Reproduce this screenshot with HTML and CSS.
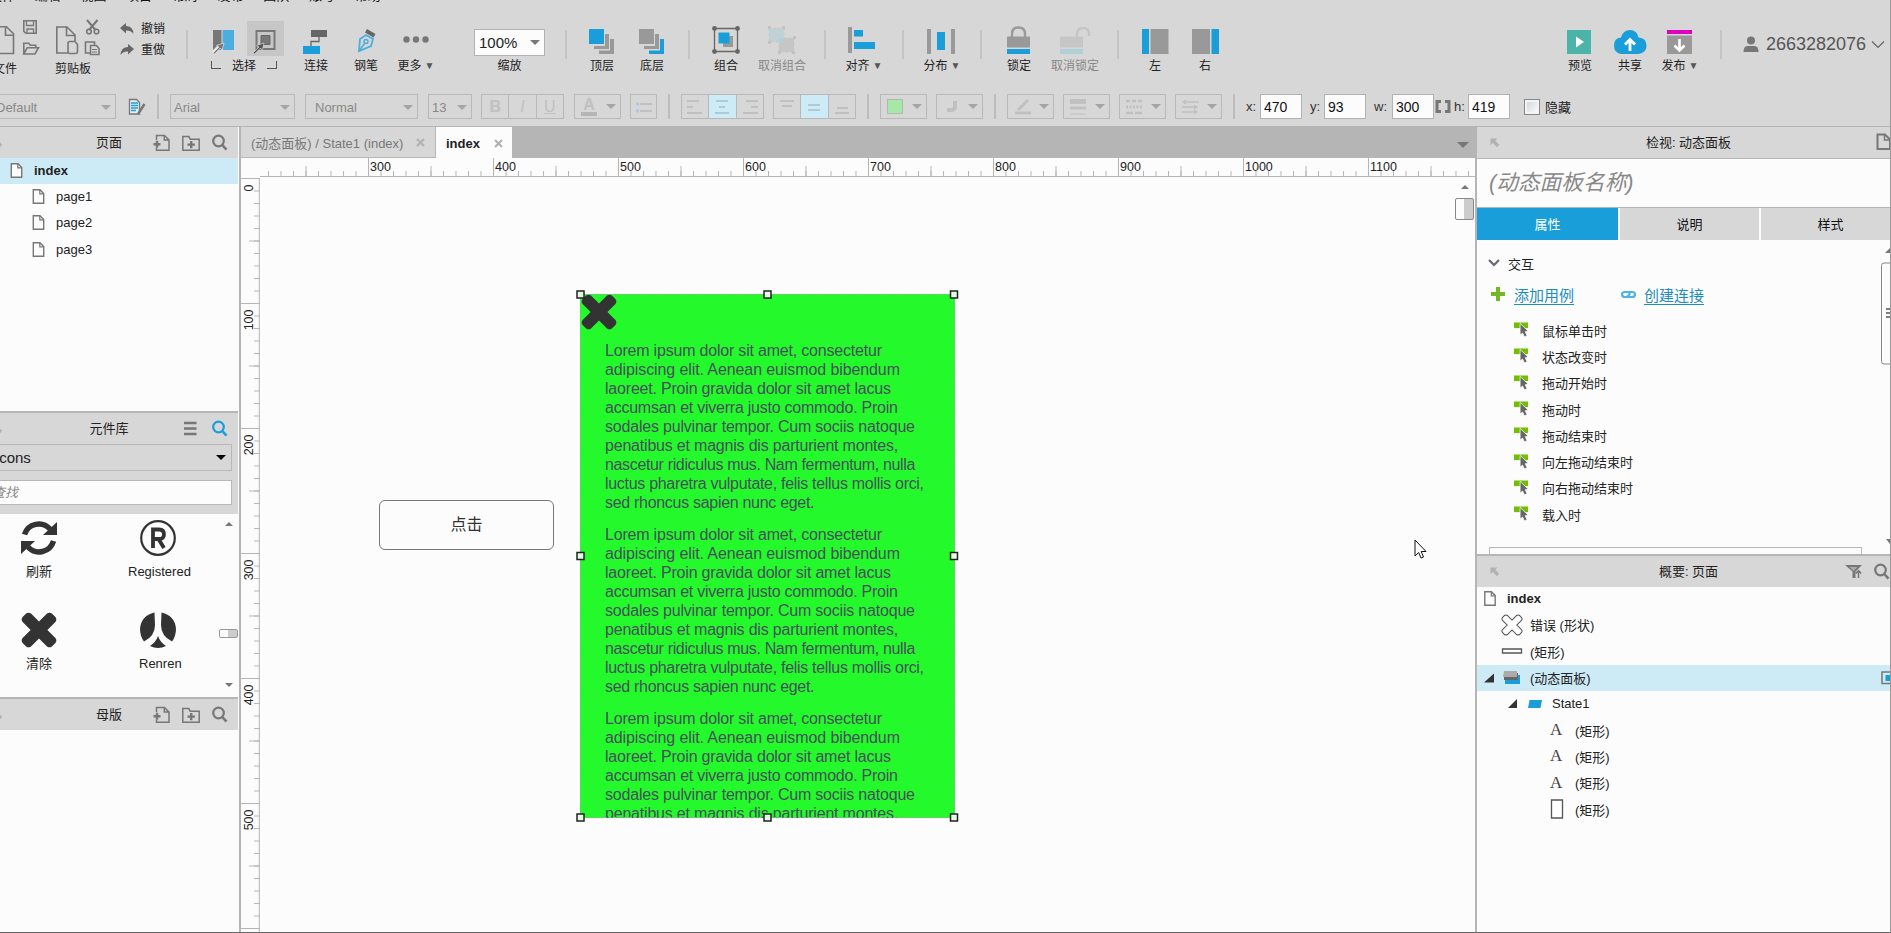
FILE: index.html
```html
<!DOCTYPE html>
<html lang="zh-CN">
<head>
    <meta charset="UTF-8">
    <title>index</title>
    <link rel="stylesheet" href="styles.css">
</head>
<body>
    <svg class="symbols" width="0" height="0">
        <symbol id="page" viewBox="0 0 12 15"><path d="M.8.8h6.7l3.7 3.7v9.7H.8z" fill="#fcfcfc" stroke="#777" stroke-width="1.4"/><path d="M7.3.8v4h4" fill="none" stroke="#777" stroke-width="1.2"/></symbol>
        <symbol id="search" viewBox="0 0 18 18"><circle cx="7.5" cy="7" r="5.3" fill="none" stroke="currentColor" stroke-width="2.2"/><path d="M11.3 11l4.2 4.7" stroke="currentColor" stroke-width="2.6"/></symbol>
        <symbol id="addpage" viewBox="0 0 18 18"><path d="M3.5 6V1.5h8L16 6v10.3H3.5V14M11.3 1.5V6H16" fill="none" stroke="#777" stroke-width="1.5"/><path d="M.5 10.2h7M4 6.7v7" stroke="#777" stroke-width="2.4"/></symbol>
        <symbol id="addfolder" viewBox="0 0 18 18"><path d="M.8 16.2V2.6h6l1.4 2.6h9v11z" fill="none" stroke="#777" stroke-width="1.5"/><path d="M5.5 10.6h7.4M9.2 7v7.2" stroke="#777" stroke-width="2.4"/></symbol>
        <symbol id="corner" viewBox="0 0 10 10"><path d="M.5.5h7L5.3 2.8l4 4L7 9.2 2.8 5 .5 7.3z" fill="#b2b2b2"/></symbol>
        <symbol id="event" viewBox="0 0 16 16"><path d="M0 0h15v6H0z" fill="#74bd05"/><path d="M6.500 1l8.500 8-3 .8 2 4.300-3 1.200-1.800-4-2.700 2z" fill="#666" stroke="#fcfcfc" stroke-width=".8"/></symbol>
        <symbol id="times" viewBox="0 0 36 36" overflow="visible"><path d="M18 9.600L26 1.600Q28.500 -.3 30.900 1.600L34.400 5.100Q36.300 7.500 34.400 10L26.400 18L34.400 26Q36.300 28.500 34.400 30.900L30.900 34.400Q28.500 36.300 26 34.400L18 26.400L10 34.400Q7.500 36.300 5.100 34.400L1.600 30.900Q-.3 28.500 1.600 26L9.600 18L1.600 10Q-.3 7.500 1.600 5.100L5.100 1.600Q7.500 -.3 10 1.600Z"/></symbol>
    </svg>

    <div class="app">
        <div class="menubar">
            <span>文件</span><span>编辑</span><span>视图</span><span>项目</span><span>布局</span><span>发布</span><span>团队</span><span>账号</span><span>帮助</span>
        </div>

        <div class="tools">
            <div class="tool-file">
                <svg width="50" height="40" fill="none" stroke="#777" stroke-width="1.6"><path d="M-5 8.8H6.5l7 7v19.7H-5M5.5 8.8v8.5h8"/><path d="M23.8 2.8h12.4v12.4H25.8l-2-2z"/><path d="M26.5 3v4.5h7V3M27 15v-4h6.5v4" stroke-width="1.3"/><path d="M23.8 36V25.2h5l1.5 2h5.5v3M23.8 36l3.4-6.3h11.3L35 36z"/></svg>
                <p>文件</p>
            </div>
            <div class="tool-clip">
                <svg width="52" height="40" fill="none" stroke="#777" stroke-width="1.6"><path d="M18 35H6.800V9H17l8 8v6M16.500 9v8.500H25"/><path d="M18 25.500q0-2 2-2h5l2.500 3V33.500q0 2-2 2h-5.500q-2 0-2-2z"/><path d="M37 2l8.500 10M47.500 2L39 12" stroke-width="2"/><circle cx="39" cy="13.500" r="2.300"/><circle cx="46.500" cy="13.500" r="2.300"/><path d="M40 35h-4.500V24h9v3M40.500 27.500h6l2.500 3v6h-8.500z"/><path d="M42 31.500h5M42 34h5" stroke-width="1"/></svg>
                <p>剪贴板</p>
            </div>
            <div class="tool-undo">
                <p><svg width="14" height="14" fill="#666"><path d="M0 6l6-5v3q7 0 7.500 8Q11 8 6 8.500v3z"/></svg>撤销</p>
                <p><svg width="14" height="14" fill="#666"><path d="M14 6L8 1v3Q1 4 .5 12 3 8 8 8.500v3z"/></svg>重做</p>
            </div>
            <i class="sep"></i>
            <div class="tool-select">
                <svg width="74" height="36"><path d="M37 0h37v35H37z" fill="#c6c6c6"/><path d="M3 9h8.500v20H3z" fill="#777"/><path d="M12.500 9H24v20H12.500z" fill="#4caedd"/><path d="M46.500 10h18v18h-18z" fill="none" stroke="#777" stroke-width="2"/><path d="M51 14.500h9v9h-9z" fill="#777" stroke="#666"/><path d="M3 32l7-7" stroke="#e8e8e8" stroke-width="4"/><path d="M3 32l6-6-2.500-1.500L14 22l-1.800 7.500L10.500 27l-6 6z" fill="#777" stroke="#eee" stroke-width=".6"/><path d="M43 32l6-6-2.500-1.500L54 22l-1.800 7.500-1.700-2.500-6 6z" fill="#555" stroke="#ddd" stroke-width=".6"/></svg>
                <p><i class="bracket open"></i>选择<i class="bracket end"></i></p>
            </div>
            <div class="tool">
                <svg width="36" height="36"><path d="M13 9h16v7H13z" fill="#666"/><path d="M5 25h17v8H5z" fill="#199ed9"/><path d="M21 16v4.500h-8V25" fill="none" stroke="#666" stroke-width="1.300"/></svg>
                <p>连接</p>
            </div>
            <div class="tool">
                <svg width="36" height="36"><path d="M11 30l1-12 6-4 7 4-2 7z" fill="none" stroke="#4caedd" stroke-width="1.800"/><path d="M11 30l6-8" stroke="#4caedd" stroke-width="1.500"/><circle cx="18" cy="20.500" r="2" fill="none" stroke="#4caedd" stroke-width="1.500"/><path d="M19 8l8.500 5-2 3.500-8.500-5z" fill="#666"/></svg>
                <p>钢笔</p>
            </div>
            <div class="tool">
                <svg width="36" height="36" fill="#777"><circle cx="8.500" cy="18.500" r="3.200"/><circle cx="18" cy="18.500" r="3.200"/><circle cx="27.500" cy="18.500" r="3.200"/></svg>
                <p>更多<b>▼</b></p>
            </div>
            <div class="tool-zoom">
                <div class="zoom-box">100%<i class="caret dark"></i></div>
                <p>缩放</p>
            </div>
            <i class="sep"></i>
            <div class="tool">
                <svg width="36" height="36"><path d="M5 8h15v15H5z" fill="#199ed9"/><path d="M21 13h4v15H10v-3h11zM26 18h4v15H15v-3.500h11z" fill="#999"/></svg>
                <p>顶层</p>
            </div>
            <div class="tool">
                <svg width="36" height="36"><path d="M5 8h15v15H5zM21 13h4v15H10v-3h11z" fill="#999"/><path d="M26 18h4v15H15v-3.500h11z" fill="#199ed9"/></svg>
                <p>底层</p>
            </div>
            <i class="sep"></i>
            <div class="tool">
                <svg width="36" height="36"><path d="M15 15h10v11H15z" fill="#999"/><path d="M10.500 11.500h11v11h-11z" fill="#199ed9"/><path d="M6.500 7.500h23v23h-23z" fill="none" stroke="#666" stroke-width="1.300"/><g fill="#666"><circle cx="6.500" cy="7.500" r="2.400"/><circle cx="29.500" cy="7.500" r="2.400"/><circle cx="6.500" cy="30.500" r="2.400"/><circle cx="29.500" cy="30.500" r="2.400"/></g></svg>
                <p>组合</p>
            </div>
            <div class="tool wide off">
                <svg width="36" height="36"><path d="M5 7h15v14H5z" fill="#c0d2d6"/><path d="M15 17h15v14H15z" fill="#c6c6c6"/><path d="M15 17h5v4h-5z" fill="#abd3df"/><path d="M5 7h15v14H5zM15 17h15v14H15z" fill="none" stroke="#c6c6c6" stroke-dasharray="2 3"/><path d="M4 5h3v3H4zM18 5h3v3h-3zM4 20h3v3H4zM14 30h3v3h-3zM28 30h3v3h-3zM29 15h3v3h-3z" fill="#c2c2c2"/></svg>
                <p>取消组合</p>
            </div>
            <i class="sep"></i>
            <div class="tool menu">
                <svg width="36" height="36"><path d="M2 6h4v26H2z" fill="#999"/><path d="M8 9h9v6.500H8zM8 21h21v7H8z" fill="#199ed9"/></svg>
                <p>对齐<b>▼</b></p>
            </div>
            <i class="sep tight"></i>
            <div class="tool menu">
                <svg width="36" height="36"><path d="M3 8h4v25H3zM27 8h4v25h-4z" fill="#999"/><path d="M13 11h8v18h-8z" fill="#199ed9"/></svg>
                <p>分布<b>▼</b></p>
            </div>
            <i class="sep tight"></i>
            <div class="tool lock">
                <svg width="36" height="36"><path d="M11 16v-3q0-6.500 6.500-6.500T24 13v3" fill="none" stroke="#999" stroke-width="2.400"/><path d="M6 15.500h23v11H6z" fill="#999"/><path d="M6 28h23v5H6z" fill="#199ed9"/></svg>
                <p>锁定</p>
            </div>
            <div class="tool wide off">
                <svg width="36" height="36"><path d="M20 16v-3q0-6 6-6t6 6v2" fill="none" stroke="#c4c4c4" stroke-width="2.400"/><path d="M3 15.500h23v11H3z" fill="#c6c6c6"/><path d="M3 28h23v5H3z" fill="#afd1d5"/></svg>
                <p>取消锁定</p>
            </div>
            <i class="sep"></i>
            <div class="tool">
                <svg width="36" height="36"><path d="M5 8h7v25H5z" fill="#199ed9"/><path d="M13.500 8h18v25h-18z" fill="#999"/></svg>
                <p>左</p>
            </div>
            <div class="tool">
                <svg width="36" height="36"><path d="M5 8h18v25H5z" fill="#999"/><path d="M24.500 8H32v25h-7.500z" fill="#199ed9"/></svg>
                <p>右</p>
            </div>
            <div class="tool push">
                <svg width="36" height="36"><path d="M5 9h24v24H5z" fill="#4cb3a9"/><path d="M14 15.500l8 5.500-8 5.500z" fill="#fff"/></svg>
                <p>预览</p>
            </div>
            <div class="tool">
                <svg width="36" height="36"><path d="M9 33q-7-1-7-8.500t7-8Q11 9 18 9t8.500 7.500q8 .5 8 8T26.500 33z" fill="#199ed9"/><path d="M18 30V18.500M13 23.500l5-5 5 5" fill="none" stroke="#fff" stroke-width="2.800"/></svg>
                <p>共享</p>
            </div>
            <div class="tool">
                <svg width="36" height="36"><path d="M5 9h25v4H5z" fill="#dc00bf"/><path d="M5 14.500h25V33H5z" fill="#999"/><path d="M17.500 18v11M12.500 24.500l5 5 5-5" fill="none" stroke="#fff" stroke-width="2.600"/></svg>
                <p>发布<b>▼</b></p>
            </div>
            <i class="sep last"></i>
            <div class="user">
                <svg width="16" height="17" fill="#777"><circle cx="8" cy="4.500" r="4"/><path d="M.5 16q0-6 4-6h7q4 0 4 6z"/></svg>
                <span>2663282076</span>
                <svg width="14" height="9"><path d="M1 1.500l6 6 6-6" fill="none" stroke="#666" stroke-width="1.200"/></svg>
            </div>
        </div>

        <div class="format">
            <div class="select default">Default<i class="caret"></i></div>
            <svg class="style-icon" width="18" height="18"><path d="M1.500 1.500h7l3 3v11.500h-10z" fill="#eee" stroke="#777" stroke-width="1.300"/><path d="M3 5h7M3 7.500h7M3 10h7M3 12.500h5" stroke="#199ed9" stroke-width="1.300"/><path d="M16.500 6L10 16" stroke="#777" stroke-width="2.500"/></svg>
            <i class="bar"></i>
            <div class="select font">Arial<i class="caret"></i></div>
            <div class="select weight">Normal<i class="caret"></i></div>
            <div class="select size">13<i class="caret"></i></div>
            <div class="group biu"><span><b>B</b></span><span><i>I</i></span><span><u>U</u></span></div>
            <div class="drop color"><em>A</em><i class="caret"></i></div>
            <div class="group one"><span><svg width="18" height="14"><path d="M5 4h12M5 11h12" stroke="#c0c0c0" stroke-width="2"/><path d="M1 4h3M1 11h3" stroke="#a9cdd6" stroke-width="3"/></svg></span></div>
            <i class="bar"></i>
            <div class="group">
                <span><svg width="16" height="16" stroke="#c0c0c0" stroke-width="2"><path d="M0 2h12M0 8h6M0 14h15"/></svg></span>
                <span class="on"><svg width="16" height="16" stroke="#a9cdd1" stroke-width="2"><path d="M2 2h12M5 8h6M1 14h14"/></svg></span>
                <span><svg width="16" height="16" stroke="#c0c0c0" stroke-width="2"><path d="M4 2h12M9 8h7M1 14h15"/></svg></span>
            </div>
            <div class="group valign">
                <span><svg width="16" height="16" stroke="#c0c0c0" stroke-width="2"><path d="M1 2h14M3 7h10"/></svg></span>
                <span class="on"><svg width="16" height="16" stroke="#a9cdd1" stroke-width="2"><path d="M2 6h12M2 11h12"/></svg></span>
                <span><svg width="16" height="16" stroke="#c0c0c0" stroke-width="2"><path d="M3 9h11M1 14h14"/></svg></span>
            </div>
            <i class="bar"></i>
            <div class="drop"><i class="swatch"></i><i class="caret"></i></div>
            <div class="drop"><svg width="16" height="16"><path d="M12 2v5q0 4-4 4H4" fill="none" stroke="#c0c0c0" stroke-width="4"/></svg><i class="caret"></i></div>
            <i class="bar"></i>
            <div class="drop"><svg width="18" height="16" stroke="#c0c0c0"><path d="M4 11L14 1" stroke-width="3"/><path d="M1 14h16" stroke-width="3"/></svg><i class="caret"></i></div>
            <div class="drop"><svg width="16" height="16" stroke="#c0c0c0"><path d="M0 2.500h16" stroke-width="5"/><path d="M0 9h16" stroke-width="3"/><path d="M0 15h16"/></svg><i class="caret"></i></div>
            <div class="drop"><svg width="17" height="16" stroke="#c0c0c0"><path d="M0 2h17" stroke-width="2.500" stroke-dasharray="4 2"/><path d="M0 8h17" stroke-width="3" stroke-dasharray="2 1.500"/><path d="M0 14h17" stroke-width="2.500" stroke-dasharray="7 2"/></svg><i class="caret"></i></div>
            <div class="drop"><svg width="17" height="16" stroke="#c0c0c0" fill="none" stroke-width="1.300"><path d="M1 3h16M4 1L1 3l3 2M0 8h15M12 6l3 2-3 2M0 13h15M12 11l3 2-3 2"/></svg><i class="caret"></i></div>
            <i class="bar"></i>
            <label class="field">x:<input value="470"></label>
            <label class="field">y:<input value="93"></label>
            <label class="field w">w:<input value="300"></label>
            <svg class="chain" width="16" height="13" fill="none" stroke="#777" stroke-width="3"><path d="M6 1.500H2v10h4M10 1.500h4v10h-4"/></svg>
            <label class="field h">h:<input value="419"></label>
            <i class="check"></i><span class="hide">隐藏</span>
        </div>

        <div class="main">
            <div class="left">
                <div class="panel pages">
                    <div class="panel-head">
                        <svg class="stub" width="3" height="10" viewBox="7 0 3 10"><use href="#corner" width="10" height="10"/></svg>
                        <h2>页面</h2>
                        <div class="panel-icons"><svg><use href="#addpage"/></svg><svg><use href="#addfolder"/></svg><svg><use href="#search"/></svg></div>
                    </div>
                    <ul class="tree">
                        <li class="root active"><svg><use href="#page"/></svg>index</li>
                        <li><svg><use href="#page"/></svg>page1</li>
                        <li><svg><use href="#page"/></svg>page2</li>
                        <li><svg><use href="#page"/></svg>page3</li>
                    </ul>
                </div>
                <div class="panel library">
                    <div class="panel-head">
                        <svg class="stub" width="3" height="10" viewBox="7 0 3 10"><use href="#corner" width="10" height="10"/></svg>
                        <h2>元件库</h2>
                        <div class="panel-icons"><svg><path d="M2 3h12.500M2 8.500h12.500M2 14h12.500" stroke="#777" stroke-width="2.300"/></svg><svg class="blue"><use href="#search"/></svg></div>
                    </div>
                    <div class="lib-filter">
                        <div class="lib-select"><span>Icons</span><i class="caret black"></i></div>
                        <div class="lib-search"><span>查找</span></div>
                    </div>
                    <div class="lib-body">
                        <div class="lib-grid">
                            <div><svg width="36" height="36"><g fill="none" stroke="#333" stroke-width="5.500"><path d="M3.500 14.500A15 15 0 0 1 29 9"/><path d="M32.500 21A15 15 0 0 1 7 27"/></g><path d="M36 2v13H22zM0 34V21h14z" fill="#333"/></svg><p>刷新</p></div>
                            <div><svg width="36" height="36"><circle cx="18" cy="18" r="16.800" fill="none" stroke="#333" stroke-width="2.200"/><path d="M13 28V9.500h6q5 0 5 4.800T19 19h-5M18.500 19l5.500 9" fill="none" stroke="#333" stroke-width="3.800"/></svg><p class="reg">Registered</p></div>
                            <div><svg width="36" height="36" fill="#333"><use href="#times"/></svg><p>清除</p></div>
                            <div><svg width="36" height="36" fill="#333"><path d="M14.500.500Q1 3.500 0 17q0 7 4 12.500Q15 24 15 13zM21.500.500Q35 3.500 36 17q0 7-4 12.500Q21 24 21 13zM18 24q-2 6-8 10 8 4 16 0-6-4-8-10z"/></svg><p>Renren</p></div>
                        </div>
                        <div class="lib-scroll"><i class="up"></i><i class="thumb"></i><i class="down"></i></div>
                    </div>
                </div>
                <div class="panel masters">
                    <div class="panel-head">
                        <svg class="stub" width="3" height="10" viewBox="7 0 3 10"><use href="#corner" width="10" height="10"/></svg>
                        <h2>母版</h2>
                        <div class="panel-icons"><svg><use href="#addpage"/></svg><svg><use href="#addfolder"/></svg><svg><use href="#search"/></svg></div>
                    </div>
                </div>
            </div>

            <div class="center">
                <div class="tabs">
                    <div class="tab">(动态面板) / State1 (index)<svg width="9" height="9"><path d="M1 1l7 7M8 1L1 8" stroke="#b2b2b2" stroke-width="2.200"/></svg></div>
                    <div class="tab current">index<svg width="9" height="9"><path d="M1 1l7 7M8 1L1 8" stroke="#b2b2b2" stroke-width="2.200"/></svg></div>
                    <i class="caret dark"></i>
                </div>
                <svg class="ruler-x" width="1234" height="19">
                    <defs>
                        <pattern id="tx" x="2" width="12.500" height="19" patternUnits="userSpaceOnUse"><path d="M.5 13v6" stroke="#b5b5b5"/></pattern>
                        <pattern id="tx5" x="2" width="62.500" height="19" patternUnits="userSpaceOnUse"><path d="M.5 8v11" stroke="#b5b5b5"/></pattern>
                        <pattern id="tx10" x="2" width="125" height="19" patternUnits="userSpaceOnUse"><path d="M.5 0v19" stroke="#b5b5b5"/></pattern>
                    </defs>
                    <path d="M19 0h1215v19H19z" fill="url(#tx)"/><path d="M19 0h1215v19H19z" fill="url(#tx5)"/><path d="M19 0h1215v19H19z" fill="url(#tx10)"/>
                    <path d="M19 18.500h1215" stroke="#b5b5b5"/>
                    <g><text x="129" y="12.500">300</text><text x="254" y="12.500">400</text><text x="379" y="12.500">500</text><text x="504" y="12.500">600</text><text x="629" y="12.500">700</text><text x="754" y="12.500">800</text><text x="879" y="12.500">900</text><text x="1004" y="12.500">1000</text><text x="1129" y="12.500">1100</text></g>
                </svg>
                <div class="stage">
                    <svg class="ruler-y" width="19" height="755">
                        <defs>
                            <pattern id="ty" width="19" height="12.500" patternUnits="userSpaceOnUse"><path d="M13 .5h6" stroke="#b5b5b5"/></pattern>
                            <pattern id="ty5" width="19" height="62.500" patternUnits="userSpaceOnUse"><path d="M8 .5h11" stroke="#b5b5b5"/></pattern>
                            <pattern id="ty10" width="19" height="125" patternUnits="userSpaceOnUse"><path d="M0 .5h19" stroke="#b5b5b5"/></pattern>
                        </defs>
                        <path d="M0 0h19v755H0z" fill="url(#ty)"/><path d="M0 0h19v755H0z" fill="url(#ty5)"/><path d="M0 0h19v755H0z" fill="url(#ty10)"/>
                        <path d="M18.300 0v755" stroke="#b5b5b5"/>
                        <g text-anchor="end"><text transform="translate(12 6.500) rotate(-90)">0</text><text transform="translate(12 131.500) rotate(-90)">100</text><text transform="translate(12 256.500) rotate(-90)">200</text><text transform="translate(12 381.500) rotate(-90)">300</text><text transform="translate(12 506.500) rotate(-90)">400</text><text transform="translate(12 631.500) rotate(-90)">500</text></g>
                    </svg>
                    <div class="canvas">
                        <div class="shape-button">点击</div>
                        <div class="dynamic">
                            <svg class="close" width="36" height="36" fill="#333"><use href="#times"/></svg>
                            <p><span>Lorem ipsum dolor sit amet, consectetur</span><span>adipiscing elit. Aenean euismod bibendum</span><span>laoreet. Proin gravida dolor sit amet lacus</span><span>accumsan et viverra justo commodo. Proin</span><span>sodales pulvinar tempor. Cum sociis natoque</span><span>penatibus et magnis dis parturient montes,</span><span>nascetur ridiculus mus. Nam fermentum, nulla</span><span>luctus pharetra vulputate, felis tellus mollis orci,</span><span>sed rhoncus sapien nunc eget.</span></p>
                            <p><span>Lorem ipsum dolor sit amet, consectetur</span><span>adipiscing elit. Aenean euismod bibendum</span><span>laoreet. Proin gravida dolor sit amet lacus</span><span>accumsan et viverra justo commodo. Proin</span><span>sodales pulvinar tempor. Cum sociis natoque</span><span>penatibus et magnis dis parturient montes,</span><span>nascetur ridiculus mus. Nam fermentum, nulla</span><span>luctus pharetra vulputate, felis tellus mollis orci,</span><span>sed rhoncus sapien nunc eget.</span></p>
                            <p><span>Lorem ipsum dolor sit amet, consectetur</span><span>adipiscing elit. Aenean euismod bibendum</span><span>laoreet. Proin gravida dolor sit amet lacus</span><span>accumsan et viverra justo commodo. Proin</span><span>sodales pulvinar tempor. Cum sociis natoque</span><span>penatibus et magnis dis parturient montes,</span></p>
                        </div>
                        <svg class="selection" width="385" height="534">
                            <path d="M5.500 5.500h374v523h-374z" fill="none" stroke="#7fbf83" stroke-dasharray="3 2"/>
                            <g fill="#e2fbe3" stroke="#222" stroke-width="1.500"><path d="M2 2h7v7H2zM189 2h7v7h-7zM375.500 2h7v7h-7zM2 263.500h7v7H2zM375.500 263.500h7v7h-7zM2 525h7v7H2zM189 525h7v7h-7zM375.500 525h7v7h-7z"/></g>
                        </svg>
                        <svg class="cursor" width="14" height="21"><path d="M1 1v16l3.700-3.500L7 19l2.500-1-2.300-5.500H12z" fill="#fff" stroke="#111"/></svg>
                        <div class="canvas-scroll"><i class="up"></i><i class="thumb"></i></div>
                    </div>
                </div>
            </div>

            <div class="right">
                <div class="panel-head inspect">
                    <span class="corner"><svg width="10" height="10"><use href="#corner"/></svg></span>
                    <h2>检视: 动态面板</h2>
                    <div class="panel-icons"><svg class="doc" width="14" height="18"><path d="M1.500 1.500h7.500l5 5v9.500H1.500z" fill="#d7d7d7" stroke="#777" stroke-width="2"/><path d="M8.500 1.500V7H14" fill="none" stroke="#777" stroke-width="1.500"/></svg></div>
                </div>
                <div class="name">(动态面板名称)</div>
                <div class="inspect-tabs"><span class="on">属性</span><span>说明</span><span>样式</span></div>
                <div class="props">
                    <div class="props-body">
                        <div class="section"><svg width="12" height="8"><path d="M1 1l5 5 5-5" fill="none" stroke="#667" stroke-width="2.200"/></svg>交互</div>
                        <div class="links">
                            <svg width="14" height="14"><path d="M7 0v14M0 7h14" stroke="#74b82a" stroke-width="4"/></svg><a>添加用例</a>
                            <svg class="link-icon" width="15" height="9" fill="none" stroke="#4db3e6" stroke-width="2.200"><path d="M7 7H4Q1 7 1 4.500T4 2h2.500q2 0 2 2t-2 1.500M8 2h3q3 0 3 2.500T11 7H8.500Q6.500 7 6.500 5.200"/></svg><a>创建连接</a>
                        </div>
                        <ul class="events">
                            <li><svg><use href="#event"/></svg>鼠标单击时</li>
                            <li><svg><use href="#event"/></svg>状态改变时</li>
                            <li><svg><use href="#event"/></svg>拖动开始时</li>
                            <li><svg><use href="#event"/></svg>拖动时</li>
                            <li><svg><use href="#event"/></svg>拖动结束时</li>
                            <li><svg><use href="#event"/></svg>向左拖动结束时</li>
                            <li><svg><use href="#event"/></svg>向右拖动结束时</li>
                            <li><svg><use href="#event"/></svg>载入时</li>
                        </ul>
                        <div class="more-events"></div>
                    </div>
                    <svg class="props-scroll" width="10" height="313"><path d="M5 13l5-5v5z" fill="#777"/><path d="M14 23H4q-2.500 0-2.500 2.500v96q0 2.500 2.500 2.500h10" fill="none" stroke="#888"/><path d="M6 69h4M6 73h4M6 77h4" stroke="#555" stroke-width="1.500"/><path d="M6 299h4v5z" fill="#777"/></svg>
                </div>
                <div class="panel-head outline-head">
                    <span class="corner"><svg width="10" height="10"><use href="#corner"/></svg></span>
                    <h2>概要: 页面</h2>
                    <div class="panel-icons"><svg width="18" height="18"><path d="M0 2h17l-6.500 6.500V15H7.500V8.500z" fill="#777"/><path d="M4.500 4h8L8.500 8z" fill="#aaa"/><path d="M13.500 15V8M10.800 10.500l2.700-3 2.700 3" fill="none" stroke="#777" stroke-width="1.500"/></svg><svg width="18" height="18"><use href="#search"/></svg></div>
                </div>
                <ul class="outline">
                    <li class="lv0"><svg width="12" height="15"><use href="#page"/></svg>index</li>
                    <li class="lv1"><svg width="22" height="22" viewBox="-1 -1 38 38" fill="#fff" stroke="#555" stroke-width="1.800"><use href="#times" width="36" height="36"/></svg>错误 (形状)</li>
                    <li class="lv1"><svg width="22" height="6"><path d="M1.500 1h19v4h-19z" fill="#fff" stroke="#555" stroke-width="1.300"/></svg>(矩形)</li>
                    <li class="lv1 active"><svg class="fold" width="10" height="10"><path d="M10 .5V9.500H0z" fill="#333"/></svg><svg width="22" height="16"><path d="M4 5h15v9H4z" fill="#199ed9"/><path d="M3 3h14v7H3z" fill="#666"/><path d="M3 1h13v6H2z" fill="#aaa"/></svg>(动态面板)<svg class="vis" width="9" height="14"><path d="M10 1H1v11.500h9" fill="none" stroke="#777" stroke-width="1.500"/><path d="M4.500 4H9v6H4.500z" fill="#199ed9"/></svg></li>
                    <li class="lv2"><svg class="fold" width="9" height="9"><path d="M9 0v9H0z" fill="#333"/></svg><svg width="14" height="8"><path d="M1.500 0H14l-1.500 8H0z" fill="#199ed9"/></svg>State1</li>
                    <li class="lv3"><em>A</em>(矩形)</li>
                    <li class="lv3"><em>A</em>(矩形)</li>
                    <li class="lv3"><em>A</em>(矩形)</li>
                    <li class="lv3"><svg width="14" height="20"><path d="M1.500 1h11v18h-11z" fill="#fff" stroke="#555" stroke-width="1.300"/></svg>(矩形)</li>
                </ul>
            </div>
        </div>
    </div>
</body>
</html>
```

FILE: styles.css
```css
* {
    box-sizing: border-box;
}
body {
    margin: 0;
    font-family: "Liberation Sans", "Noto Sans CJK SC", sans-serif;
    font-size: 13px;
    color: #222;
    background: #fcfcfc;
}
p, h2, ul {
    margin: 0;
    padding: 0;
    font-weight: normal;
    list-style: none;
}
svg {
    display: block;
    flex-shrink: 0;
}
.symbols {
    position: absolute;
}
.app {
    width: 1891px;
    height: 933px;
    display: flex;
    flex-direction: column;
    overflow: hidden;
    border-right: 1px solid #999;
    border-bottom: 1px solid #666;
}

/* menu and toolbar */
.menubar {
    height: 2px;
    flex-shrink: 0;
    display: flex;
    align-items: flex-end;
    gap: 19.700px;
    overflow: hidden;
    background: #d7d7d7;
    font-size: 13px;
    line-height: 14px;
    color: #111;
}
.menubar span {
    height: 13px;
}
.menubar span:first-child {
    margin-left: -11px;
}
.tools {
    height: 92px;
    flex-shrink: 0;
    display: flex;
    background: #d7d7d7;
    font-size: 12px;
    line-height: 16px;
    white-space: nowrap;
}
.sep {
    width: 2px;
    height: 29px;
    margin: 28px 11px 0;
    background: #c4c4c4;
    flex-shrink: 0;
}
.sep.tight {
    margin: 28px 0 0;
}
.sep.last {
    margin-left: 15px;
}
.tool {
    width: 50px;
    padding-top: 19px;
    display: flex;
    flex-direction: column;
    align-items: center;
}
.tool p,
.tool-select p {
    padding-top: 1px;
}
.tool.wide {
    width: 62px;
}
.tool.menu {
    width: 76px;
}
.tool.off {
    color: #888;
}
.tool.push {
    margin-left: auto;
}
.tool b {
    font-size: 10px;
    color: #555;
    margin-left: 3px;
    vertical-align: 1px;
    line-height: 8px;
    font-weight: normal;
}
.tool.lock {
    margin-left: 12px;
}
.sep:has(+ .tool.menu) {
    margin-right: 0;
}
.tool-file {
    width: 50px;
    padding-top: 16px;
}
.tool-file p {
    margin: 3px 0 0 -7px;
}
.tool-clip {
    width: 62px;
    padding-top: 16px;
}
.tool-clip p {
    margin: 3px 0 0 5px;
}
.tool-undo {
    width: 74px;
    padding: 19px 0 0 8px;
}
.tool-undo p {
    display: flex;
    align-items: center;
    gap: 7px;
    margin-bottom: 5px;
}
.tool-undo + .sep {
    margin: 28px 22px 0 0;
}
.tool-select {
    width: 81px;
    padding-top: 19px;
}
.tool-select p {
    display: flex;
    gap: 11px;
    padding-left: 1px;
}
.bracket {
    width: 10px;
    height: 8px;
    margin-top: 3px;
    border-bottom: 1.500px solid #555;
}
.bracket.open {
    border-left: 1.500px solid #555;
}
.bracket.end {
    border-right: 1.500px solid #555;
}
.tool-zoom {
    width: 71px;
    margin: 27px 9px 0 33px;
    text-align: center;
}
.tool-zoom + .sep {
    margin-right: 10px;
}
.zoom-box {
    height: 27px;
    display: flex;
    align-items: center;
    justify-content: space-between;
    padding: 0 4px;
    margin-bottom: 2px;
    font-size: 15px;
    background: #fcfcfc;
    border: 1px solid #b2b2b2;
}
.user {
    width: 157px;
    height: 30px;
    margin-top: 27px;
    display: flex;
    align-items: center;
    padding-left: 10px;
    color: #555;
    font-size: 18px;
}
.user span {
    margin: 0 5px 0 7px;
}
.caret {
    width: 0;
    height: 0;
    border: 5px solid transparent;
    border-top-color: #a5a5a5;
    border-bottom: 0;
    flex-shrink: 0;
}
.caret.dark {
    border-top-color: #777;
}
.caret.black {
    border-top-color: #000;
}

/* format bar */
.format {
    height: 33px;
    flex-shrink: 0;
    display: flex;
    align-items: flex-start;
    background: #d7d7d7;
    border-bottom: 1px solid #b5b5b5;
    color: #888;
    line-height: 25px;
}
.bar {
    width: 2px;
    height: 25px;
    margin: 0 11px;
    background: #bdbdbd;
    flex-shrink: 0;
}
.select,
.drop,
.group {
    height: 25px;
    flex-shrink: 0;
    display: flex;
    align-items: center;
    justify-content: space-between;
    border: 1px solid #b8b8b8;
    padding: 1px 4px 0 3px;
}
.default {
    width: 116px;
    border-left: 0;
    padding-left: 0;
    text-indent: -4px;
    margin-right: 12px;
}
.style-icon {
    margin-top: 4px;
}
.font {
    width: 125px;
    margin-right: 10px;
}
.weight {
    width: 113px;
    padding-left: 9px;
    margin-right: 10px;
}
.size {
    width: 44px;
    margin-right: 9px;
}
.group {
    padding: 0;
    width: 83px;
}
.group span {
    flex: 1;
    height: 23px;
    display: flex;
    align-items: center;
    justify-content: center;
    color: #c0c0c0;
    font-size: 16px;
}
.group span + span {
    border-left: 1px solid #b8b8b8;
}
.group .on {
    background: #cdebf7;
}
.group.one {
    width: 27px;
}
.group.valign {
    margin-left: 9px;
}
.biu + .drop {
    margin-left: 10px;
}
.drop {
    width: 47px;
    padding: 0 4px 0 6px;
    margin-right: 9px;
}
.drop:has(+ .bar) {
    margin-right: 0;
}
.drop em {
    font: bold 16px/14px "Liberation Sans";
    width: 16px;
    text-align: center;
    color: #c0c0c0;
    border-bottom: 4px solid #b5b5b5;
}
.swatch {
    width: 16px;
    height: 15px;
    background: #a5e8a8;
    border: 1px solid #b5b5b5;
}
.field {
    display: flex;
    width: 56px;
    margin-right: 8px;
    color: #333;
    justify-content: space-between;
}
.field input {
    width: 42px;
    height: 25px;
    padding: 1px 3px 0;
    font: 14px "Liberation Sans", sans-serif;
    color: #111;
    background: #fcfcfc;
    border: 1px solid #b2b2b2;
    border-radius: 0;
}
.field.w {
    width: 60px;
    margin-right: 1px;
}
.chain {
    margin: 6px 3px 0 0;
}
.field.h {
    width: 56px;
    margin-right: 14px;
}
.check {
    width: 16px;
    height: 16px;
    margin: 5px 5px 0 0;
    border: 1px solid #888;
    background: linear-gradient(135deg, #ccd2d5, #fff);
    box-shadow: inset 0 0 0 2px #f4f4f4;
}
.hide {
    color: #222;
    line-height: 27px;
}

/* panels */
.main {
    flex: 1;
    min-height: 0;
    display: flex;
}
.left {
    width: 241px;
    border-right: 2px solid #b5b5b5;
    padding-right: 1px;
}
.panel-head {
    height: 31px;
    display: flex;
    align-items: center;
    background: #d7d7d7;
    color: #222;
}
.left .panel-head {
    padding-right: 9px;
}
.panel-head h2 {
    flex: 1;
    text-align: center;
    font-size: 13px;
    line-height: 30px;
}
.stub {
    margin-right: 62px;
}
.panel-icons {
    width: 76px;
    display: flex;
    gap: 11px;
    justify-content: flex-end;
    color: #777;
}
.panel-icons svg {
    width: 18px;
    height: 18px;
}
.panel-icons .blue {
    color: #199ed9;
}
.pages {
    height: 284px;
}
.tree li {
    height: 26px;
    display: flex;
    align-items: center;
    gap: 11px;
    padding: 0 0 1px 32px;
}
.tree li:last-child {
    padding-top: 1px;
}
.tree svg {
    width: 13px;
    height: 15px;
}
.tree .root {
    padding-left: 10px;
    font-weight: bold;
}
.active {
    background: #cdebf7;
}
.library,
.masters {
    border-top: 2px solid #b5b5b5;
}
.library {
    height: 286px;
}
.lib-filter {
    height: 70px;
    background: #d7d7d7;
}
.lib-select {
    width: 232px;
    height: 27px;
    display: flex;
    align-items: center;
    justify-content: space-between;
    padding-right: 5px;
    font-size: 15px;
    border: 1px solid #b8b8b8;
    border-left: 0;
    text-indent: -5px;
}
.lib-search {
    width: 232px;
    height: 25px;
    margin-top: 9px;
    line-height: 23px;
    color: #888;
    font-style: italic;
    background: #fcfcfc;
    border: 1px solid #b8b8b8;
    border-left: 0;
    text-indent: -8px;
    overflow: hidden;
}
.lib-body {
    height: 183px;
    display: flex;
    justify-content: space-between;
}
.lib-grid {
    display: grid;
    grid-template-columns: 119px 80px;
    grid-template-rows: 92px 91px;
    padding-left: 20px;
}
.lib-grid svg {
    margin: 6px 0 6px 1px;
}
.lib-grid p {
    line-height: 20px;
    padding-left: 6px;
}
.lib-grid p.reg {
    margin-left: -17px;
}
.lib-grid div:last-child p {
    padding-left: 0;
}
.lib-scroll {
    width: 19px;
    display: flex;
    flex-direction: column;
    align-items: center;
    justify-content: space-between;
    padding: 8px 0 10px;
}
.up,
.down {
    width: 0;
    height: 0;
    border: 4px solid transparent;
    border-bottom: 4px solid #777;
    border-top: 0;
}
.down {
    border-top: 4px solid #777;
    border-bottom: 0;
}
.lib-scroll .thumb {
    width: 19px;
    height: 9px;
    margin-top: 98px;
    border: 1px solid #999;
    border-radius: 2px;
    background: linear-gradient(90deg, #fcfcfc 45%, #ccc 50%);
}
.lib-scroll .down {
    margin-top: 40px;
}

/* editor */
.center {
    width: 1234px;
    display: flex;
    flex-direction: column;
}
.tabs {
    height: 31px;
    display: flex;
    align-items: center;
    background: #b5b5b5;
}
.tab {
    width: 195px;
    height: 31px;
    display: flex;
    align-items: center;
    justify-content: space-between;
    padding: 0 10px 0 10px;
    background: #d7d7d7;
    color: #777;
    border-bottom: 1px solid #b5b5b5;
    border-right: 1px solid #b5b5b5;
    white-space: nowrap;
}
.tab.current {
    width: 76px;
    padding: 1px 9px 0 10px;
    color: #222;
    font-weight: bold;
    background: #fcfcfc;
    border: 0;
}
.tabs .caret {
    margin: 4px 6px 0 auto;
    border-width: 6px 6px 0;
}
.ruler-x,
.ruler-y {
    font-size: 12.500px;
    fill: #222;
}
.stage {
    flex: 1;
    min-height: 0;
    display: flex;
}
.ruler-y {
    margin-top: 1px;
}
.canvas {
    position: relative;
    flex: 1;
    overflow: hidden;
}
.shape-button {
    position: absolute;
    left: 119px;
    top: 323px;
    width: 175px;
    height: 50px;
    line-height: 47px;
    text-align: center;
    font-size: 16px;
    color: #333;
    border: 1px solid #777;
    border-radius: 6px;
}
.dynamic {
    position: absolute;
    left: 320px;
    top: 117px;
    width: 375px;
    height: 524px;
    overflow: hidden;
    background: #24f92c;
}
.dynamic .close {
    margin: 0 0 11px 1px;
}
.dynamic p {
    margin: 0 0 12.500px 25px;
    font-size: 16px;
    line-height: 19.040px;
    color: #46505a;
    white-space: nowrap;
}
.dynamic span {
    display: block;
    letter-spacing: -0.2px;
}
.dynamic span:nth-child(2) {
    letter-spacing: -0.1px;
}
.dynamic span:nth-child(4) {
    letter-spacing: -0.24px;
}
.dynamic span:nth-child(7) {
    letter-spacing: -0.35px;
}
.dynamic span:nth-child(8),
.dynamic span:nth-child(9) {
    letter-spacing: -0.3px;
}
.selection {
    position: absolute;
    left: 315px;
    top: 112px;
}
.cursor {
    position: absolute;
    left: 1154px;
    top: 362px;
}
.canvas-scroll {
    position: absolute;
    right: 1px;
    top: 8px;
    width: 19px;
    display: flex;
    flex-direction: column;
    align-items: center;
    gap: 9px;
}
.canvas-scroll .thumb {
    width: 19px;
    height: 22px;
    border: 1px solid #888;
    border-radius: 2px;
    background: linear-gradient(90deg, #fcfcfc 45%, #ccc 50%);
}

/* inspector */
.right {
    flex: 1;
    border-left: 2px solid #b5b5b5;
    overflow: hidden;
}
.right .panel-icons {
    width: 45px;
}
.outline-head .panel-icons {
    gap: 10px;
    justify-content: flex-start;
}
.inspect {
    height: 32px;
    border-bottom: 1px solid #b5b5b5;
}
.inspect .panel-icons .doc {
    width: 14px;
    margin-top: -2px;
}
.corner {
    width: 55px;
    padding-left: 13px;
}
.name {
    height: 49px;
    padding-left: 12px;
    line-height: 47px;
    font-size: 21.700px;
    font-style: italic;
    color: #888;
    border-bottom: 1px solid #b5b5b5;
}
.inspect-tabs {
    height: 32px;
    display: flex;
    gap: 2px;
}
.inspect-tabs span {
    width: 139px;
    flex-shrink: 0;
    text-align: center;
    line-height: 33px;
    color: #111;
    background: #d7d7d7;
}
.inspect-tabs .on {
    width: 141px;
    color: #fff;
    background: #199ed9;
}
.props {
    height: 314px;
    display: flex;
    justify-content: space-between;
    overflow: hidden;
}
.props-body {
    padding: 9px 0 0 11px;
}
.section {
    height: 28px;
    display: flex;
    align-items: center;
    gap: 8px;
}
.links {
    height: 34px;
    display: flex;
    align-items: center;
    padding-left: 3px;
    font-size: 15px;
}
.links a {
    margin-left: 9px;
    color: #1d8dbd;
    text-decoration: underline;
    text-underline-offset: 3px;
}
.links .link-icon {
    margin-left: 47px;
    margin-right: -1px;
}
.events {
    padding: 6px 0 0 26px;
}
.events li {
    height: 26.300px;
    display: flex;
    align-items: center;
    gap: 13px;
}
.events svg {
    width: 15px;
    height: 16px;
}
.more-events {
    width: 373px;
    height: 20px;
    margin: 20px 0 0 1px;
    border: 1px solid #b8b8b8;
}
.outline-head {
    height: 33px;
    border-top: 2px solid #b5b5b5;
}
.outline {
    margin-top: -1px;
}
.outline li {
    height: 26.300px;
    display: flex;
    align-items: center;
    gap: 7px;
    padding-bottom: 1px;
}
.outline .lv0 {
    padding-left: 7px;
    gap: 11px;
    font-weight: bold;
}
.outline .lv1 {
    padding-left: 24px;
}
.outline .lv1.active {
    padding-left: 7px;
}
.outline .lv2 {
    padding-left: 31px;
    gap: 10px;
}
.outline .lv2 .fold {
    margin-right: 1px;
}
.outline .lv3 {
    padding-left: 73px;
    gap: 11px;
}
.outline em {
    width: 14px;
    font: 17px "Liberation Serif", serif;
    color: #444;
}
.vis {
    margin-left: auto;
}
```
